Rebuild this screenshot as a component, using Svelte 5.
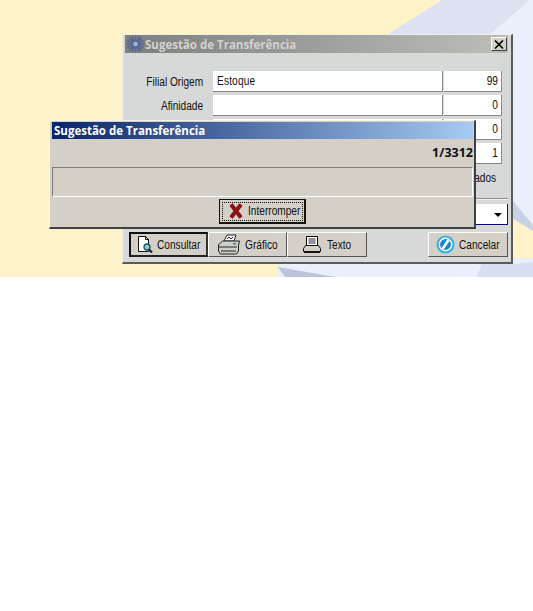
<script lang="ts">
  const fields = [
    { label: 'Filial Origem', text: 'Estoque', code: '99' },
    { label: 'Afinidade', text: '', code: '0' },
    { label: '', text: '', code: '0' },
    { label: '', text: '', code: '1' }
  ];
</script>

<div class="desk">
  <svg class="wallpaper" width="533" height="277" viewBox="0 0 533 277">
    <polygon points="442,0 533,0 533,277 278,277 278,264 512,264 512,34 388,34" fill="#e9f0fb" />
    <polygon points="442,0 530,0 490,34 388,34" fill="#dde2f1" />
    <polygon points="512,200 533,225 533,258 512,258" fill="#fdf2c8" />
    <polygon points="512,200 533,225 533,231 512,218" fill="#c8d1e6" />
    <polygon points="278,267 335,277 285,277" fill="#bcc3da" />
    <polygon points="482,264 513,264 533,262 533,277 476,277" fill="#d8dff0" />
  </svg>

  <section class="win main">
    <header class="title inactive">
      <svg class="logo" width="19" height="18" viewBox="0 0 20 18">
        <g stroke="#4f6596" stroke-width="1.5">
          <path d="M10 0v18M1 9h18M3.5 2.5l13 13M16.5 2.5l-13 13M6 1l8 16M14 1L6 17M1.500 5.500l17 7M18.500 5.500l-17 7" />
        </g>
        <circle cx="10" cy="9" r="2.500" fill="#9fb0d0" />
      </svg>
      <span>Sugestão de Transferência</span>
      <button class="close" aria-label="Fechar">
        <svg width="10" height="9" viewBox="0 0 10 9"><path d="M1 .5l8 8M9 .5l-8 8" stroke="#000" stroke-width="1.600" /></svg>
      </button>
    </header>

    <div class="form">
      {#each fields as f}
        <div class="row">
          <label><span class="narrow end">{f.label}</span></label>
          <div class="input name"><span class="narrow">{f.text}</span></div>
          <div class="input code"><span class="narrow end">{f.code}</span></div>
        </div>
      {/each}
      <div class="check"><span class="narrow end">ados</span></div>
    </div>

    <div class="combo-row">
      <div class="combo"><i class="arrow"></i></div>
    </div>

    <div class="actions">
      <button class="btn default">
        <svg width="16" height="17" viewBox="0 0 16 17">
          <path d="M1.500 .5h7l3 3v12h-10z" fill="#fff" stroke="#111" />
          <path d="M8.500 .5v3h3" fill="none" stroke="#111" />
          <circle cx="10" cy="11" r="3" fill="#8fcfc8" stroke="#24505c" stroke-width="1.300" />
          <path d="M12 13.500l3 3" stroke="#123" stroke-width="2.200" />
        </svg>
        <span class="narrow">Consultar</span>
      </button>
      <button class="btn">
        <svg width="24" height="22" viewBox="0 0 24 22">
          <path d="M7 7l3-6h9l-2 6z" fill="#fff" stroke="#222" />
          <path d="M10 5l2-2 2 2 2-2" fill="none" stroke="#222" />
          <path d="M1.500 11l4-4h17l-1 4v6l-2 3H3.500l-2-3z" fill="#cfcfca" stroke="#222" />
          <path d="M2 13h18M4 17h15" stroke="#222" />
          <rect x="16" y="9" width="3" height="1.500" fill="#2c9c3c" />
        </svg>
        <span class="narrow">Gráfico</span>
      </button>
      <button class="btn wide">
        <svg width="18" height="17" viewBox="0 0 18 17">
          <rect x="3.500" y=".5" width="11" height="9" fill="#fff" stroke="#111" />
          <path d="M5.500 3h7M5.500 5h7M5.500 7h7" stroke="#223" />
          <path d="M2.500 9.500h13l2 3v3H.5v-3z" fill="#d4d0c8" stroke="#111" />
          <path d="M1 15h16v2H1z" fill="#111" />
        </svg>
        <span class="narrow">Texto</span>
      </button>
      <button class="btn cancel">
        <svg width="19" height="19" viewBox="0 0 20 20">
          <circle cx="10" cy="10" r="9.500" fill="#35b4ea" />
          <circle cx="10" cy="10" r="6.500" fill="#1c84cf" stroke="#fff" stroke-width="1.500" />
          <path d="M7 14.500l6-9" stroke="#fff" stroke-width="2.800" />
        </svg>
        <span class="narrow">Cancelar</span>
      </button>
    </div>
  </section>

  <section class="win progress">
    <header class="title active"><span>Sugestão de Transferência</span></header>
    <div class="count">1/3312</div>
    <div class="bar"></div>
    <div class="stop-row">
      <button class="btn stop">
        <span class="focus">
          <svg width="14" height="16" viewBox="0 0 14 16">
            <path d="M2 1.500l10 13M12 1.500L2 14.500" stroke="#8e1010" stroke-width="4" />
          </svg>
          <span class="narrow">Interromper</span>
        </span>
      </button>
    </div>
  </section>
</div>

<style>
  :global(body) {
    background: #fff;
  }

  .desk {
    position: relative;
    width: 533px;
    height: 277px;
    overflow: hidden;
    background: #fdf2c8;
    font-family: "Liberation Sans", Arial, sans-serif;
    font-size: 12.5px;
    color: #111;
  }

  .wallpaper {
    position: absolute;
    inset: 0;
  }

  /* no narrow face is installed, so the text is squeezed */
  .narrow {
    display: inline-block;
    white-space: nowrap;
    transform: scaleX(0.81);
    transform-origin: left center;
  }

  .narrow.end {
    transform-origin: right center;
  }

  .win {
    position: absolute;
    box-sizing: border-box;
    display: flex;
    flex-direction: column;
    border: 1px solid;
  }

  .main {
    left: 122px;
    top: 34px;
    width: 391px;
    height: 230px;
    padding: 0 3px 0 2px;
    background: #d6d9d8;
    border-width: 1px 2px 2px 1px;
    border-color: #eeeeec #5a5a5a #5a5a5a #eeeeec;
  }

  .progress {
    left: 49px;
    top: 120px;
    width: 427px;
    height: 109px;
    padding: 1px 1px 0 2px;
    background: #d4d0c8;
    border-width: 1px 2px 2px 1px;
    border-color: #f4f4f0 #404040 #404040 #f4f4f0;
  }

  .title {
    display: flex;
    align-items: center;
    flex: none;
    height: 18px;
    font-family: "Open Sans", sans-serif;
    font-weight: 700;
    font-size: 11.5px;
  }

  .title.inactive {
    color: #d2d2ce;
    background: linear-gradient(90deg, #7f7f7f, #bdbdb8);
    padding: 0 1px;
  }

  .title.active {
    height: 17px;
    padding-left: 2px;
    color: #fff;
    background: linear-gradient(90deg, #0a246a, #a6caf0);
  }

  .close {
    margin-left: auto;
    width: 16px;
    height: 14px;
    padding: 0;
    display: flex;
    align-items: center;
    justify-content: center;
    background: #d4d0c8;
    border: 1px solid;
    border-color: #fff #404040 #404040 #fff;
  }

  .form {
    display: flex;
    flex-direction: column;
    gap: 3px;
    padding-top: 18px;
  }

  .row {
    display: flex;
    align-items: center;
    height: 21px;
  }

  label {
    width: 78px;
    margin-right: 10px;
    text-align: right;
  }

  .input {
    box-sizing: border-box;
    height: 21px;
    line-height: 20px;
    background: #fff;
    border-right: 1px solid #8a8a8a;
    border-bottom: 1px solid #8a8a8a;
    padding: 0 4px;
  }

  .name {
    width: 230px;
    letter-spacing: 0.2px;
  }

  .code {
    width: 58px;
    margin-left: 1px;
    padding-right: 3px;
    text-align: right;
  }

  .check {
    align-self: flex-end;
    margin: 4px 12px 0 0;
    line-height: 14px;
  }

  .combo-row {
    display: flex;
    justify-content: flex-end;
    margin-top: 13px;
    padding-top: 5px;
    border-top: 1px solid #8e8e8e;
    box-shadow: inset 0 1px 0 #f2f2f0;
  }

  .combo {
    position: relative;
    box-sizing: border-box;
    width: 100px;
    height: 21px;
    background: #fff;
    border-right: 1px solid #0a0a80;
    border-bottom: 1px solid #0a0a80;
  }

  .arrow {
    position: absolute;
    right: 5px;
    top: 9px;
    border: 4px solid transparent;
    border-top: 4px solid #000;
    border-bottom: 0;
  }

  .actions {
    display: flex;
    padding: 7px 0 0 4px;
  }

  .btn {
    box-sizing: border-box;
    display: flex;
    align-items: center;
    gap: 4px;
    width: 79px;
    height: 25px;
    padding: 0 0 0 8px;
    overflow: hidden;
    background: #d4d0c8;
    font: inherit;
    color: #111;
    border: 1px solid;
    border-color: #fff #555 #555 #fff;
  }

  .btn svg {
    flex: none;
  }

  .btn .narrow {
    flex: none;
  }

  .btn.default {
    padding-left: 6px;
    border: 2px solid #111;
    border-color: #111 #333 #222 #111;
  }

  .btn.wide {
    width: 80px;
    padding-left: 15px;
    gap: 6px;
  }

  .btn.cancel {
    width: 80px;
    margin-left: auto;
    padding-left: 7px;
  }

  .count {
    flex: none;
    height: 28px;
    line-height: 28px;
    text-align: right;
    font-family: "Open Sans", sans-serif;
    font-weight: 700;
    font-size: 12.5px;
  }

  .bar {
    flex: none;
    box-sizing: border-box;
    height: 30px;
    border: 1px solid;
    border-color: #808080 #fff #fff #808080;
  }

  .stop-row {
    display: flex;
    justify-content: center;
    padding-top: 2px;
  }

  .btn.stop {
    width: 87px;
    padding: 0 0 0 2px;
    border: 1px solid #111;
    border-width: 1px 2px 2px 1px;
  }

  .focus {
    box-sizing: border-box;
    display: flex;
    align-items: center;
    gap: 5px;
    width: 81px;
    height: 19px;
    padding-left: 6px;
    overflow: hidden;
    border: 1px dotted #111;
  }
</style>
